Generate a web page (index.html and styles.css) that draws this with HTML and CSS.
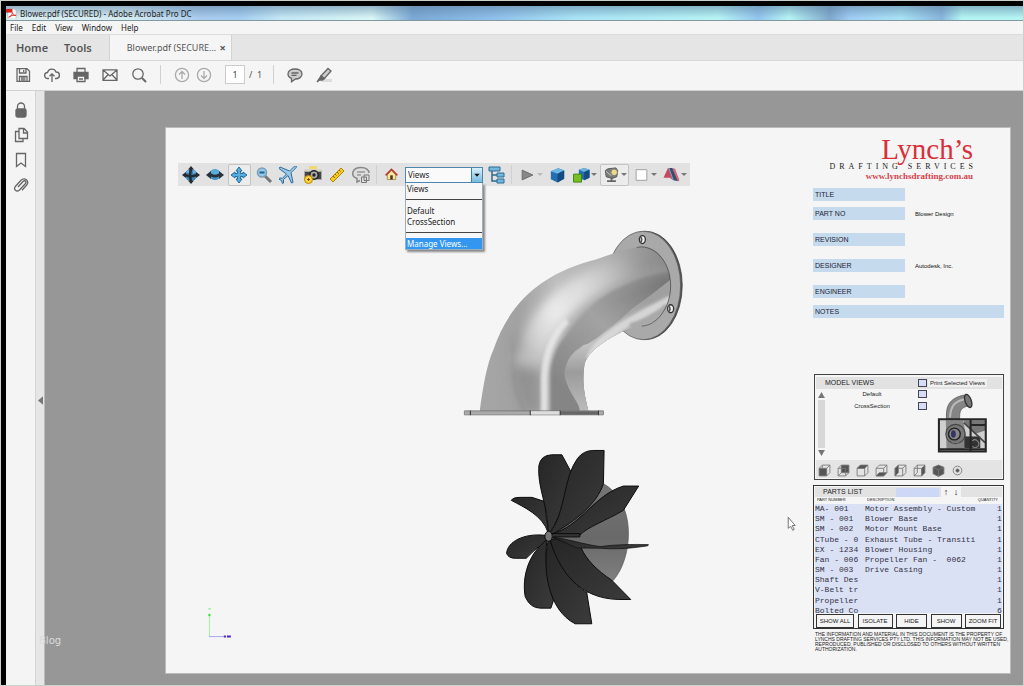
FILE: index.html
```html
<!DOCTYPE html>
<html lang="en">
<head>
<meta charset="utf-8">
<title>Blower.pdf (SECURED) - Adobe Acrobat Pro DC</title>
<link rel="stylesheet" href="styles.css">
</head>
<body>
<div class="window">
  <header class="titlebar">
    <svg class="app-icon" viewBox="0 0 12 12"><path d="M2 1h7l2 2v9H2z" fill="#fff" stroke="#aaa" stroke-width=".6"/><path d="M0 1h7v4H0z" fill="#d8261c"/><path d="M3 10c3-1 4-3 4-5 1 3 2 3 4 3-3 0-6 0-8 2z" fill="none" stroke="#d8261c" stroke-width=".9"/></svg>
    <span>Blower.pdf (SECURED) - Adobe Acrobat Pro DC</span>
  </header>
  <nav class="menubar">
    <button>File</button><button>Edit</button><button>View</button><button>Window</button><button>Help</button>
  </nav>
  <div class="tabs">
    <button class="tab-link">Home</button>
    <button class="tab-link">Tools</button>
    <div class="doc-tab"><span>Blower.pdf (SECURE...</span><button class="close" aria-label="Close tab">×</button></div>
  </div>
  <div class="toolbar">
    <button class="tool" aria-label="Save"><svg viewBox="0 0 16 16"><path d="M2 1.700h10l2.500 2.500v10.100H2z M4.500 2v4h6.500V2 M8.700 3v2 M4.500 14V9.500h7.500V14 M6 11.200h4.500 M6 12.800h4.500"/></svg></button>
    <button class="tool" aria-label="Upload"><svg viewBox="0 0 16 16"><path d="M5 11.500H3.800a3 3 0 0 1-.3-6A4.500 4.500 0 0 1 12 5a3.200 3.200 0 0 1 .3 6.500H11 M8 15V7 M5.500 9.300 8 6.800l2.500 2.500"/></svg></button>
    <button class="tool" aria-label="Print"><svg viewBox="0 0 16 16"><path d="M4 5V1.500h8V5 M4 10v4.500h8V10 M6 12h4"/><path d="M1 5.500h14v6h-3V9H4v2.500H1z" fill="#666"/></svg></button>
    <button class="tool" aria-label="Email"><svg viewBox="0 0 16 16"><path d="M1 2.800h14v10.500H1z M1 3l7 6 7-6 M1 13l5-5.300 M15 13l-5-5.300"/></svg></button>
    <button class="tool" aria-label="Search"><svg viewBox="0 0 16 16"><circle cx="7" cy="7" r="5.200"/><path d="m11 11 4 4" stroke-width="2"/></svg></button>
    <i class="rule"></i>
    <button class="tool faint" aria-label="Previous page"><svg viewBox="0 0 16 16"><circle cx="8" cy="8" r="6.600"/><path d="M8 12V4.500 M5 7.500l3-3 3 3"/></svg></button>
    <button class="tool faint" aria-label="Next page"><svg viewBox="0 0 16 16"><circle cx="8" cy="8" r="6.600"/><path d="M8 4v7.500 M5 8.500l3 3 3-3"/></svg></button>
    <input class="page-no" aria-label="Page number" value="1"><span class="page-total">/&nbsp; 1</span>
    <i class="rule"></i>
    <button class="tool" aria-label="Comment"><svg viewBox="0 0 16 16"><path d="M8 2c4 0 7 2 7 5s-3 5-6.500 5L4.500 14.700V11.300C2 10.500 1 9 1 7c0-3 3-5 7-5z" fill="#ccc"/><path d="M4.500 6h7 M4.500 8.300h5"/></svg></button>
    <button class="tool" aria-label="Highlight"><svg viewBox="0 0 16 16"><path d="M5 15h11v-3H8z" fill="#ddd" stroke="none"/><path d="M5 9 12 1.500 15 4 8.500 11.500z" fill="#ccc"/><path d="M5 9 8.500 11.500 6.500 13H3.500L1 15z" fill="#666"/></svg></button>
  </div>
  <div class="workspace">
    <aside class="rail">
      <button class="tool" aria-label="Security"><svg viewBox="0 0 16 16"><path d="M4.500 8V4.500a3.500 3.500 0 0 1 7 0V8"/><rect x="3" y="7" width="10" height="8" rx="1.500" fill="#666"/></svg></button>
      <button class="tool" aria-label="Pages"><svg viewBox="0 0 16 16"><path d="M6 1.500h5l3.500 3.500v6.500H6z M10.500 1.500V6h4 M6 4.500H2.500v10H10v-3"/></svg></button>
      <button class="tool" aria-label="Bookmarks"><svg viewBox="0 0 16 16"><path d="M3.500 1.500h9v13L8 11l-4.500 3.500z"/></svg></button>
      <button class="tool" aria-label="Attachments"><svg viewBox="0 0 16 16"><path d="m5 10 5-5.500c2-1.800 4 .3 2.300 2.200L6.500 13c-3 2.500-6.500-.5-4-3.800L8 3.300c3.500-3.500 9 .7 5.700 4.700L9 13.300"/></svg></button>
    </aside>
    <div class="gutter"><button aria-label="Expand panel"><svg viewBox="0 0 6 10"><path d="M6 0v10L0 5z" fill="#777"/></svg></button></div>
    <main class="desk">
      <span class="watermark">Blog</span>
      <section class="sheet">
        <div class="viewport">
          <div class="bar3d">
            <div class="group">
              <button aria-label="Rotate"><svg viewBox="0 0 18 18"><circle cx="9" cy="9" r="6" fill="#3b86b5"/><path d="M9 0 12 3.500 10 3.500Q8.500 9 10 14.500L12 14.500 9 18 6 14.500 7.500 14.500Q6 9 7.500 3.500L6 3.500z" fill="#222b32"/><path d="M0 9 4 6 4 8Q9 10 14 8L14 6 18 9 14 12 14 10.500Q9 12.500 4 10.500L4 12z" fill="#222b32"/><path d="M4 7q1-3 3-3.500v3.500zM11 4q3 1 3 3l-3 .5z" fill="#69b1dc"/></svg></button>
              <button aria-label="Spin"><svg viewBox="0 0 18 18"><circle cx="9" cy="8.500" r="5.500" fill="#4593c6"/><path d="M0 9l5-4v2.500q4 2 8 0V5l5 4-5 4v-2.500q-4 2-8 0V13z" fill="#29323a"/><path d="M5 5q4-3 8 0v2q-4 3-8 0z" fill="#5badde"/></svg></button>
              <button class="active" aria-label="Pan"><svg viewBox="0 0 18 18"><path d="M9 1l3 4h-1.500v2.500H13V6l4 3-4 3v-1.500h-2.500V13H12l-3 4-3-4h1.500v-2.500H5V12L1 9l4-3v1.500h2.500V5H6z" fill="#56aee0" stroke="#276a9b"/></svg></button>
              <button aria-label="Zoom"><svg viewBox="0 0 18 18"><path d="m10 10 6 6" stroke="#777" stroke-width="3"/><circle cx="7" cy="6.500" r="4.500" fill="#91caee" stroke="#7d9cb4" stroke-width="1.500"/><path d="M4.500 6.500h5" stroke="#265e88" stroke-width="2"/></svg></button>
              <button aria-label="Fly"><svg viewBox="0 0 18 18"><path d="M17.500 0c1 1-4 5.500-5.500 6.500l2 10-1.500.5-3.500-7.500-4.500 4v3.500l-1 .5-1-3-3-1.500 1-1 3 .3L7.500 8 0 2.500 1 1l9.500 4c2-2 6-6 7-5z" fill="#9dc8e5" stroke="#2c6c9d"/></svg></button>
              <button aria-label="Camera"><svg viewBox="0 0 18 18"><path d="M5 0h8v5H5z" fill="#efd875"/><path d="M0 3h18v11H0z" fill="#aaa"/><path d="M0 3h18v2H0z" fill="#d9d5c5"/><path d="M1 6h16v7H1z" fill="#444"/><circle cx="10" cy="9" r="4.200" fill="#aaa" stroke="#222" stroke-width="1.500"/><circle cx="10" cy="9" r="1.700" fill="#222"/><circle cx="4.500" cy="13.500" r="4" fill="#fbd33c" stroke="#b98700"/><path d="M3 13.500h3 M4.500 12v3" stroke="#7a5200"/></svg></button>
              <button aria-label="Measure"><svg viewBox="0 0 18 18"><path d="M2 13 13 2l3 3L5 16z" fill="#f5c823" stroke="#b48700"/><path d="m5 10 2 2 M7 8l1.500 1.500 M9 6l2 2 M11 4l1.500 1.500" stroke="#8f6a00"/></svg></button>
              <button aria-label="3D comment"><svg viewBox="0 0 18 18"><path d="M8 14.500 5 16v-3.500C-2 10 0 1.500 9 1.500c5 0 8 2.500 8 5.500" fill="#ddd" stroke="#888" stroke-width="1.500"/><path d="M5 6h8 M5 9h4" stroke="#777" stroke-width="1.200"/><path d="M9.500 11h5v5.500h-5z M12 9h5v5.500h-5z" fill="#ddd" fill-opacity=".6" stroke="#777"/></svg></button>
            </div>
            <i class="rule"></i>
            <button class="home" aria-label="Default view"><svg viewBox="0 0 18 18"><path d="M4 9v6h10V9L9 4z" fill="#f6e4a2" stroke="#a68642"/><path d="M2 10 9 3l7 7" fill="none" stroke="#b63c30" stroke-width="2"/><path d="M7.500 10h3v5h-3z" fill="#4b3218"/></svg></button>
            <div class="combo">
              <select aria-label="Views"><option>Views</option><option>Default</option><option>CrossSection</option></select>
              <svg class="combo-arrow" viewBox="0 0 11 14"><path d="M2.500 5.500h6L5.500 9z" fill="#111"/></svg>
              <ul class="menu" role="listbox">
                <li role="option">Views</li>
                <li class="line"></li>
                <li role="option">Default</li>
                <li role="option">CrossSection</li>
                <li class="line"></li>
                <li role="option" aria-selected="true" class="selected">Manage Views...</li>
              </ul>
            </div>
            <button class="tree" aria-label="Model tree"><svg viewBox="0 0 18 18"><path d="M4 4v11h5 M4 9h5" fill="none" stroke="#2f6a91" stroke-width="1.500"/><g fill="#72b7dd" stroke="#2f6a91"><path d="M1 1h11v4H1z M9 7h7v4H9z M9 13h7v4H9z"/></g></svg></button>
            <i class="rule"></i>
            <button class="drop play" aria-label="Play"><svg viewBox="0 0 18 18"><path d="M3 3.500 15 9 3 14.500z" fill="#888" stroke="#666"/></svg><i class="caret pale"></i></button>
            <button class="single" aria-label="Perspective"><svg viewBox="0 0 18 18"><path d="m1 4.500 9-3.500 7 2.500v10L9 18l-8-4z" fill="#236fae"/><path d="m1 4.500 9-3.500 7 2.500-8 4z" fill="#6db6e4"/><path d="m9 7.500 8-4v10L9 18z" fill="#154b82"/></svg></button>
            <button class="drop" aria-label="Render mode"><svg viewBox="0 0 18 18"><path d="m6 3 6-2 6 2v9l-6 3-6-3z" fill="#236fae"/><path d="m6 3 6-2 6 2-6 2.500z" fill="#6db6e4"/><path d="m12 5.500 6-2.500v9l-6 3z" fill="#154b82"/><path d="M0 8h9v9H0z" fill="#75bf24" stroke="#3f7d0d"/></svg><i class="caret"></i></button>
            <button class="drop active" aria-label="Lighting"><svg viewBox="0 0 18 18"><path d="M2 4 5 2l9-1 2 3-1 7-5 2-7-2z" fill="#7c7c78" stroke="#555"/><path d="M3 5 9 10" stroke="#ccc"/><circle cx="12" cy="6" r="3.700" fill="#ecd98a" stroke="#777"/><path d="M9 11v4 M4 16h10" stroke="#666" stroke-width="2"/></svg><i class="caret"></i></button>
            <button class="drop" aria-label="Background colour"><svg viewBox="0 0 18 18"><path d="M3 3h12v12H3z" fill="#fff" stroke="#999"/></svg><i class="caret"></i></button>
            <button class="drop" aria-label="Cross section"><svg viewBox="0 0 18 18"><path d="M0 12 5 1l4 1 2 13-4-3z" fill="#c64b62"/><path d="M6 1h4l7 15-6-1z" fill="#32516f"/><path d="M10 1l3 1 5 13-2 1z" fill="#d06679"/><path d="M6 1l5 14" stroke="#7eb1d6"/></svg><i class="caret"></i></button>
          </div>
          <svg class="scene" viewBox="165 185 640 488" preserveAspectRatio="xMinYMin meet" role="img" aria-label="Exhaust tube and propeller fan">
            <defs>
              <linearGradient id="body" x1="90" y1="0" x2="662" y2="0" gradientUnits="userSpaceOnUse"><stop offset="0" stop-color="#a6a6a6"/><stop offset=".2" stop-color="#a2a2a2"/><stop offset=".4" stop-color="#bdbdbd"/><stop offset=".65" stop-color="#b0b0b0"/><stop offset="1" stop-color="#868686"/></linearGradient>
              <linearGradient id="glow" x1="270" y1="400" x2="570" y2="130" gradientUnits="userSpaceOnUse"><stop offset="0" stop-color="#e8e8e8" stop-opacity=".5"/><stop offset=".3" stop-color="#ebebeb"/><stop offset=".6" stop-color="#dcdcdc" stop-opacity=".9"/><stop offset="1" stop-color="#ccc" stop-opacity="0"/></linearGradient>
              <linearGradient id="shade" x1="330" y1="500" x2="640" y2="170" gradientUnits="userSpaceOnUse"><stop offset="0" stop-color="#858585"/><stop offset=".5" stop-color="#a3a3a3"/><stop offset="1" stop-color="#757575"/></linearGradient>
              <linearGradient id="lip" x1="0" y1="240" x2="0" y2="572" gradientUnits="userSpaceOnUse"><stop offset="0" stop-color="#a0a0a0"/><stop offset=".4" stop-color="#c2c2c2"/><stop offset=".65" stop-color="#9c9c9c"/><stop offset="1" stop-color="#bbb"/></linearGradient>
              <linearGradient id="blade" x1="0" y1="0" x2="1" y2="1"><stop offset="0" stop-color="#262626"/><stop offset="1" stop-color="#3b3b3b"/></linearGradient>
              <linearGradient id="cone" x1="0" y1="0" x2="0" y2="1"><stop offset="0" stop-color="#757575"/><stop offset=".5" stop-color="#696969"/><stop offset="1" stop-color="#858585"/></linearGradient>
              <filter id="soft" x="-40%" y="-40%" width="180%" height="180%"><feGaussianBlur stdDeviation="16"/></filter>
              <filter id="fine" x="-30%" y="-30%" width="160%" height="160%"><feGaussianBlur stdDeviation="5"/></filter>
              <clipPath id="pipe"><path d="M88 572C98 500 108 435 130 385C180 240 280 155 440 115C490 98 540 80 578 77C625 77 662 130 662 196C662 260 620 315 580 316C545 318 525 328 508 338C455 365 405 400 402 440C395 490 405 530 415 572z"/></clipPath>
            </defs>
            <g transform="translate(450 220) scale(.33333)">
              <ellipse cx="586" cy="194" rx="111" ry="163" fill="#555" stroke="#333" stroke-width="2"/>
              <ellipse cx="580" cy="194" rx="112" ry="163" fill="#a9a9a9" stroke="#555" stroke-width="2"/>
              <g clip-path="url(#pipe)">
                <path d="M80 60h600v520H80z" fill="url(#body)"/>
                <path d="M192 340C180 480 200 530 228 580H275L270 430Q240 360 192 340z" fill="#8b8b8b" opacity=".75" filter="url(#soft)"/>
                <path d="M192 370C180 480 200 530 225 575" fill="none" stroke="#8d8d8d" stroke-width="6" opacity=".6" filter="url(#fine)"/>
                <path d="M235 440C260 300 350 200 570 125" fill="none" stroke="url(#glow)" stroke-width="85" filter="url(#soft)"/>
                <path d="M300 580V460C303 420 315 380 345 345C400 270 450 225 520 195C580 165 630 155 690 150V330H500L420 440V580z" fill="url(#shade)" filter="url(#fine)"/>
                <path d="M345 345C400 270 450 225 520 195C580 165 630 150 690 140" fill="none" stroke="#a0a0a0" stroke-width="26" opacity=".6" filter="url(#soft)"/>
                <path d="M282 590V470C285 400 310 340 350 300" fill="none" stroke="#e6e6e6" stroke-width="20" opacity=".9" filter="url(#fine)"/>
                <path d="M388 572C392 550 355 520 343 465C343 430 360 400 385 385L400 373 412 370 440 352 490 315 545 265 600 225 670 170V330H520L400 440 420 580z" fill="url(#lip)"/>
                <path d="M418 415C450 345 535 300 665 235" fill="none" stroke="#dadada" stroke-width="24" opacity=".9" filter="url(#fine)"/>
                <path d="M540 315Q610 305 650 255" fill="none" stroke="#a8a8a8" stroke-width="16" filter="url(#fine)"/>
              </g>
              <path d="M560 80C600 68 662 110 662 196C662 260 620 315 575 316" fill="none" stroke="#444" stroke-width="2"/>
              <g fill="#f3f3f3" stroke="#333" stroke-width="4"><ellipse cx="577" cy="56" rx="9" ry="12"/><ellipse cx="662" cy="264" rx="9" ry="12"/></g>
              <path d="M571 47q8 8 0 19M656 255q8 8 0 19" fill="none" stroke="#555" stroke-width="5"/>
              <path d="M42 571H460V583H42z" fill="#aaa" stroke="#666" stroke-width="2"/><path d="M240 572h90v10h-90z" fill="#ddd"/><path d="M330 572h115v11H330z" fill="#666"/><path d="M60 570v14M240 570v14M330 570v14M445 570v14" stroke="#333" stroke-width="3"/>
            </g>
            <g transform="translate(490 440) scale(.33333)" stroke="#0c0c0c" stroke-width="3" stroke-linejoin="round">
              <path d="M340 130C440 185 430 350 370 420L290 458 180 290z" fill="url(#cone)" stroke="#555" stroke-width="2"/>
              <g fill="url(#blade)">
                <path d="M174 278C158 225 100 200 63 180Q68 171 90 171H125L165 184C164 220 172 250 176 278z"/>
                <path d="M174 278C175 200 140 140 146 75Q152 44 185 43H215L243 95C230 170 210 230 178 278z"/>
                <path d="M180 278C225 220 220 110 262 54Q280 30 310 30H342L340 130C320 190 260 240 184 283z"/>
                <path d="M184 281C270 260 310 165 400 137H446L400 210C350 240 290 260 268 286z"/>
                <path d="M165 285C100 278 50 305 49 340Q55 354 75 354H108Q140 320 173 298z"/>
                <path d="M170 298C115 340 94 410 105 470Q120 504 150 504H182L190 480C165 400 165 350 170 298z"/>
                <path d="M174 300C155 390 175 510 255 551H305L290 458C230 420 190 340 180 300z"/>
                <path d="M180 298C205 390 265 475 385 478H422L365 420C320 390 290 360 273 323L195 295z"/>
                <path d="M185 290C230 295 270 310 330 319C380 312 430 312 475 313Q478 317 465 318C420 325 370 328 330 324L260 323z" stroke-width="2"/>
              </g>
              <path d="M188 280h81v10h-81" fill="#333"/><ellipse cx="175" cy="288" rx="11" ry="15" fill="#777"/>
            </g>
            <path d="M208.500 613v24" stroke="#a5efa5"/><path d="M208 636.500h16" stroke="#a9a9f0"/><path d="M207.500 614h2v2h-2z" fill="#28e328"/><path d="M207 608h3l-1 2z" fill="#8bea8b"/><path d="M223 635.500h2v2h-2zM226 635.500h4v2h-4z" fill="#4a25d0"/>
            <path d="M788.500 517v11l2.500-2 2 4 1.500-.8-2-4h3z" fill="#fff" stroke="#555" stroke-width=".8"/>
          </svg>
        </div>
        <aside class="info">
          <div class="logo"><strong>Lynch’s</strong><span>DRAFTING SERVICES</span><a href="#">www.lynchsdrafting.com.au</a></div>
          <dl class="fields">
            <div><dt>TITLE</dt><dd></dd></div>
            <div><dt>PART NO</dt><dd>Blower Design</dd></div>
            <div class="apart"><dt>REVISION</dt><dd></dd></div>
            <div class="apart"><dt>DESIGNER</dt><dd>Autodesk, Inc.</dd></div>
            <div class="apart"><dt>ENGINEER</dt><dd></dd></div>
            <div class="wide"><dt>NOTES</dt></div>
          </dl>
          <section class="views">
            <header><h2>MODEL VIEWS</h2><input type="checkbox" id="print"><label for="print">Print Selected Views</label></header>
            <div class="views-body">
              <div class="scroll"><svg viewBox="0 0 8 7"><path d="M4 0 8 7H0z"/></svg><i></i><svg viewBox="0 0 8 7"><path d="M4 7 8 0H0z"/></svg></div>
              <div class="view-rows">
                <div><label for="v1">Default</label><input type="checkbox" id="v1"></div>
                <div><label for="v2">CrossSection</label><input type="checkbox" id="v2"></div>
              </div>
              <svg class="thumb" viewBox="410 86 150 180"><path d="M418 168h134v90H418z" fill="#cfcfcf"/><path d="M440 165C438 130 445 105 490 95L510 125C480 130 478 140 478 165z" fill="#858585" stroke="#555" stroke-width="2"/><path d="M450 160C452 125 465 112 495 106" fill="none" stroke="#bbb" stroke-width="6"/><ellipse cx="503" cy="112" rx="9" ry="20" fill="#777" stroke="#333" stroke-width="4" transform="rotate(-20 503 112)"/><path d="M438 168h50l12 60-10 24H440z" fill="#858585"/><path d="M488 168h64v30l-30 10z" fill="#777"/><circle cx="466" cy="208" r="28" fill="#777" stroke="#444" stroke-width="3"/><circle cx="463" cy="208" r="17" fill="#888" stroke="#222" stroke-width="4"/><ellipse cx="460" cy="208" rx="7" ry="11" fill="#336"/><path d="M492 215h46v34h-46z" fill="#333"/><path d="M515 228a11 11 0 1 1 0 16" fill="none" stroke="#888" stroke-width="3"/><path d="M490 175l62 58" stroke="#444" stroke-width="5"/><path d="M418 165h136v94H418zM510 165v94M510 182h44M418 252h136" fill="none" stroke="#262626" stroke-width="6"/></svg>
            </div>
            <div class="cubes">
              <button aria-label="Front"><svg viewBox="0 0 12 12"><path d="M1 4 4 1h7v7l-3 3M8 4l3-3M4 1v3"/><path class="f" d="M1 4h7v7H1z"/></svg></button>
              <button aria-label="Back"><svg viewBox="0 0 12 12"><path class="f" d="M4 1h7v7H4z"/><path d="M1 4h7v7H1zM1 4l3-3M8 11l3-3M1 11l3-3"/></svg></button>
              <button aria-label="Top"><svg viewBox="0 0 12 12"><path d="M1 4h7v7H1zM11 1v7l-3 3"/><path class="f" d="M1 4 4 1h7L8 4z"/></svg></button>
              <button aria-label="Bottom"><svg viewBox="0 0 12 12"><path d="M1 4h7v7H1zM1 4l3-3h7v7M8 4l3-3"/><path class="f" d="m1 11 3-3h7l-3 3z"/></svg></button>
              <button aria-label="Left"><svg viewBox="0 0 12 12"><path d="M1 4h7v7H1zM4 1h7v7l-3 3M8 4l3-3"/><path class="f" d="m1 4 3-3v7l-3 3z"/></svg></button>
              <button aria-label="Right"><svg viewBox="0 0 12 12"><path d="M1 4h7v7H1zM1 4l3-3h7M4 1v7l-3 3"/><path class="f" d="m8 4 3-3v7l-3 3z"/></svg></button>
              <button aria-label="Isometric"><svg viewBox="0 0 12 12"><path class="f" d="m1 3 5-2 5 2v6l-5 2.500L1 9z"/><path d="m1 3 5 2.500L11 3M6 5.500v6" stroke="#777"/></svg></button>
              <button aria-label="Fit"><svg viewBox="0 0 12 12"><circle cx="6" cy="6" r="4"/><circle class="f" cx="6" cy="6" r="1.500"/></svg></button>
            </div>
          </section>
          <section class="parts">
            <header><h2>PARTS LIST</h2><input type="text" aria-label="Find part"><button aria-label="Up">↑</button><button aria-label="Down">↓</button></header>
            <div class="heads"><span>PART NUMBER</span><span>DESCRIPTION</span><span>QUANTITY</span></div>
            <div class="list"><table>
              <tr><td>MA- 001</td><td>Motor Assembly - Custom</td><td>1</td></tr>
              <tr><td>SM - 001</td><td>Blower Base</td><td>1</td></tr>
              <tr><td>SM - 002</td><td>Motor Mount Base</td><td>1</td></tr>
              <tr><td>CTube - 0</td><td>Exhaust Tube - Transiti</td><td>1</td></tr>
              <tr><td>EX - 1234</td><td>Blower Housing</td><td>1</td></tr>
              <tr><td>Fan - 006</td><td>Propeller Fan -&nbsp; 0062</td><td>1</td></tr>
              <tr><td>SM - 003</td><td>Drive Casing</td><td>1</td></tr>
              <tr><td>Shaft Des</td><td></td><td>1</td></tr>
              <tr><td>V-Belt tr</td><td></td><td>1</td></tr>
              <tr><td>Propeller</td><td></td><td>1</td></tr>
              <tr><td>Bolted Co</td><td></td><td>6</td></tr>
            </table></div>
            <div class="actions"><button>SHOW ALL</button><button>ISOLATE</button><button>HIDE</button><button>SHOW</button><button>ZOOM FIT</button></div>
          </section>
          <p class="legal">THE INFORMATION AND MATERIAL IN THIS DOCUMENT IS THE PROPERTY OF<br>LYNCHS DRAFTING SERVICES PTY LTD. THIS INFORMATION MAY NOT BE USED,<br>REPRODUCED, PUBLISHED OR DISCLOSED TO OTHERS WITHOUT WRITTEN<br>AUTHORIZATION.</p>
        </aside>
      </section>
    </main>
  </div>
</div>
</body>
</html>
```

FILE: styles.css
```css
* { box-sizing: border-box; }
body { margin: 0; background: #000; font: 8px/11px "Noto Sans", "Open Sans", sans-serif; color: #222; }
button { margin: 0; padding: 0; border: 0; background: none; font: inherit; color: inherit; }
svg { display: block; }
.window { display: flex; flex-direction: column; height: 100vh; border: 1px solid #cbd2cd; padding: 5px 0 0 5px; }
.titlebar { display: flex; align-items: center; gap: 3px; height: 15px; border-bottom: 1px solid #84999d; white-space: nowrap;
  background: linear-gradient(#5b7f9f88, #c8f8fa00 85%), linear-gradient(90deg, #dceef2 0%, #d4ebf2 12%, #a9cbee 19%, #a4cdf0 23%, #c4e7f5 27%, #d8f6f6 36%, #7ba8d4 40%, #8fbfea 48%, #a9e4f6 56%, #b6f4f4 70%, #92c4ee 74%, #b6f4f4 77%, #7fa8cc 81%, #a0ccf4 83%, #a7e2f4 88%, #88b4dc 92%, #b4f5f4 94%); }
.app-icon { width: 11px; height: 11px; }
.menubar { display: flex; gap: 9px; height: 14px; padding: 0 4px; background: #f5f5f5; border-bottom: 1px solid #dcdcdc; }
.tabs { display: flex; height: 25px; background: #e5e5e5; }
.tab-link { margin-left: 10px; font-size: 11px; font-weight: 600; color: #555; }
.tab-link + .tab-link { margin-left: 16px; }
.doc-tab { display: flex; align-items: center; justify-content: space-between; width: 123px; margin-left: 17px; padding: 0 5px 0 17px; background: #f5f5f5; border: solid #d4d4d4; border-width: 0 1px; font-size: 9px; color: #555; white-space: nowrap; }
.close { font-size: 11px; font-weight: 700; color: #555; }
.toolbar { display: flex; align-items: center; height: 31px; padding: 0 0 2px 9px; background: #f5f5f5; border-top: 1px solid #d8d8d8; border-bottom: 1px solid #d0d0d0; }
.tool svg { width: 16px; height: 16px; fill: none; stroke: #666; stroke-width: 1.3; }
.toolbar .tool { margin-right: 13px; }
.toolbar .faint { margin-right: 6px; }
.toolbar .faint svg { stroke: #aaa; }
.rule { width: 1px; height: 19px; background: #d0d0d0; }
.toolbar .rule { margin-right: 13px; }
.page-no { width: 20px; height: 19px; margin-left: 7px; padding: 0; border: 1px solid #ccc; background: #fff; text-align: center; font: 9px "Noto Sans", sans-serif; color: #444; }
.page-total { width: 28px; padding-left: 4px; font-size: 9px; color: #555; }
.workspace { display: flex; flex: 1; min-height: 0; }
.rail { display: flex; flex-direction: column; align-items: center; gap: 9px; width: 30px; padding-top: 11px; background: #f4f4f4; border-right: 1px solid #d4d4d4; }
.rail svg { width: 16px; height: 16px; }
.gutter { display: flex; align-items: center; justify-content: center; width: 9px; padding-top: 24px; background: #e6e6e6; border-right: 1px solid #bbb; }
.gutter svg { width: 5px; height: 9px; }
.desk { position: relative; display: flex; flex: 1; padding: 36px 12px 11px 120px; background: #979797; }
.watermark { position: absolute; left: -6px; bottom: 38px; font: 10px/12px "DejaVu Sans", sans-serif; color: #dcdcdc; }
.sheet { display: flex; flex: 1; justify-content: space-between; min-width: 0; padding-right: 6px; background: #f5f5f5; border: 1px solid #bbb; }
.viewport { display: flex; flex-direction: column; flex: 1; min-width: 0; padding-top: 35px; }
.bar3d { display: flex; align-items: center; align-self: flex-start; height: 23px; margin-left: 12px; padding: 0 1px; background: #e2e2e2; }
.bar3d svg { width: 18px; height: 18px; }
.bar3d .group { display: flex; justify-content: space-between; width: 194px; margin-right: 3px; }
.bar3d button { display: flex; align-items: center; justify-content: center; width: 23px; height: 22px; }
.bar3d .active { border: 1px solid #c4c4c4; border-radius: 2px; background: #ececec; }
.bar3d .home { margin: 0 2px 0 3px; }
.bar3d .home svg { width: 15px; height: 15px; }
.bar3d .tree { margin: 0 3px 0 2px; }
.bar3d .drop { width: 29px; margin-left: 1px; gap: 1px; }
.bar3d .play { margin-left: 4px; }
.bar3d .single { width: 21px; margin: 0 1px 0 2px; }
.bar3d .single svg { width: 15px; height: 16px; }
.bar3d .drop svg { width: 17px; height: 16px; }
.caret { border: solid transparent; border-width: 3px 3px 0; border-top-color: #777; }
.caret.pale { border-top-color: #bbb; }
.combo { position: relative; width: 78px; }
.combo select { display: block; width: 100%; height: 16px; padding: 0 2px; appearance: none; border: 1px solid #4d87ad; border-radius: 0; background: #fafafa; font: 8px "Noto Sans", sans-serif; color: #222; }
.bar3d .combo-arrow { position: absolute; top: 1px; right: 1px; width: 11px; height: 14px; background: linear-gradient(#d8f0fb, #76bce0); border-left: 1px solid #3f80a8; pointer-events: none; }
.menu { position: absolute; z-index: 1; top: 16px; left: 0; width: 78px; margin: 0; padding: 0; list-style: none; background: #f7f7f7; border: 1px solid #9ab0c0; border-width: 0 1px 1px; box-shadow: 2px 2px 2px #888; white-space: nowrap; }
.menu li { height: 11px; padding-left: 1px; }
.menu .line { height: 1px; margin: 5px 0; background: #444; }
.menu .selected { background: #3397f2; color: #fff; }
.scene { flex: 1; width: 640px; min-height: 0; }
.info { width: 191px; font-family: "Liberation Sans", sans-serif; font-size: 7px; line-height: 8px; }
.logo { display: flex; flex-direction: column; align-items: flex-end; height: 60px; padding: 7px 31px 0 0; font-family: "Liberation Serif", serif; white-space: nowrap; }
.logo strong { font-size: 29px; line-height: 28px; font-weight: 400; color: #d8303a; }
.logo span { margin-right: -4px; font-size: 8px; line-height: 8px; letter-spacing: 4px; }
.logo a { font-size: 9px; line-height: 10px; font-weight: 700; color: #d6424b; text-decoration: none; }
.fields { margin: 0 0 56px; }
.fields div { display: grid; grid-template-columns: 92px 1fr; gap: 10px; margin-bottom: 6px; align-items: center; }
.fields .apart { margin: 13px 0; }
.fields .wide { grid-template-columns: 1fr; margin: -6px 0 0; }
.fields dt { height: 13px; padding: 3px 2px; background: #c6daed; color: #223; }
.fields dd { margin: 0; font-size: 6px; color: #111; }
h2 { margin: 0; font-size: 7px; line-height: 8px; font-weight: 400; }
input[type=checkbox] { appearance: none; width: 9px; height: 8px; margin: 0; border: 1px solid #445; background: #d5dcf5; }
.views { height: 106px; margin-left: 1px; border: 1px solid #444; padding: 2px 1px 1px; display: flex; flex-direction: column; }
.views header { display: flex; align-items: center; height: 12px; padding-left: 9px; background: #e2e2e2; }
.views h2 { width: 93px; }
.views header label { margin-left: 1px; padding: 0 2px; background: #f0f0f0; font-size: 6px; }
.views-body { display: flex; flex: 1; padding-top: 1px; }
.scroll { display: flex; flex-direction: column; align-items: center; gap: 2px; width: 8px; margin-left: 1px; padding: 2px 0 4px; }
.scroll svg { width: 7px; height: 6px; fill: #777; }
.scroll i { flex: 1; width: 7px; background: #d8d8d8; }
.view-rows { display: flex; flex-direction: column; gap: 4px; width: 110px; font-size: 6px; }
.view-rows div { display: flex; align-items: center; height: 8px; }
.view-rows label { width: 93px; text-align: center; padding-left: 1px; }
.thumb { width: 52px; height: 62px; margin: 2px 0 0 1px; }
.cubes { display: flex; gap: 7px; height: 18px; padding: 2px 0 0 2px; align-items: center; background: #e4e4e4; }
.cubes button { width: 12px; }
.cubes svg { width: 13px; height: 13px; fill: none; stroke: #777; stroke-width: .8; }
.cubes .f { fill: #555; }
.parts { height: 144px; margin-top: 5px; padding: 1px; border: 1px solid #333; }
.parts header { display: flex; align-items: center; height: 10px; padding-left: 8px; background: #e2e2e2; }
.parts h2 { width: 73px; }
.parts header input { width: 43px; height: 9px; margin-right: 2px; padding: 0; border: 0; background: #cdd7f6; }
.parts header button { width: 10px; height: 10px; background: #f4f4f4; font-size: 9px; font-weight: 700; }
.heads { display: flex; height: 7px; padding: 0 4px 0 2px; font-size: 4px; line-height: 6px; }
.heads span:first-child { width: 50px; }
.heads span:last-child { margin-left: auto; }
.list { height: 109px; overflow: hidden; background: #dbe1f5; }
.list table { width: 100%; height: 112px; border-spacing: 0; table-layout: fixed; font: 8px/10px "Liberation Mono", monospace; color: #334; white-space: nowrap; }
.list td { padding: 0; }
.list td:nth-child(1) { width: 50px; }
.list td:nth-child(3) { width: 5px; }
.actions { display: grid; grid-template-columns: 38px 35px 31px 31px 36px; justify-content: space-between; padding: 1px; }
.actions button { height: 14px; border: 1px solid #333; font-size: 6px; line-height: 9px; }
.legal { margin: 3px 0 0 2px; font-size: 5px; line-height: 5px; white-space: nowrap; }
```
